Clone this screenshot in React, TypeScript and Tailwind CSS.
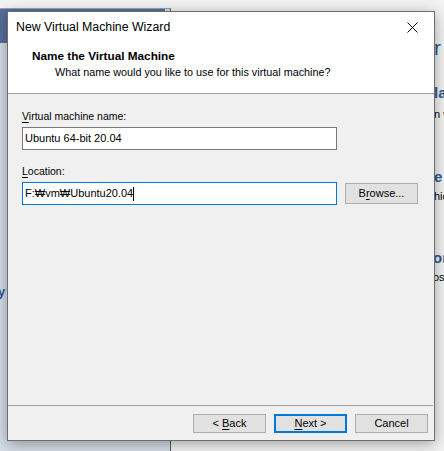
import React from "react";

const FONT = '"Liberation Sans", Arial, "Noto Sans CJK KR", sans-serif';

function U({ children }: { children: React.ReactNode }) {
  return <span className="underline underline-offset-[2px] decoration-[1px]">{children}</span>;
}

function Btn({ children, primary = false, className = "" }: { children: React.ReactNode; primary?: boolean; className?: string }) {
  return (
    <div
      className={
        "flex items-center justify-center w-[73px] h-[19px] bg-[#e1e1e1] text-[11px] leading-none text-black " +
        (primary ? "border-2 border-[#0078d7] " : "border border-[#adadad] ") +
        className
      }
    >
      <span>{children}</span>
    </div>
  );
}

export default function App() {
  return (
    <div className="relative w-[444px] h-[451px] overflow-hidden bg-[#f3f3f3]" style={{ fontFamily: FONT }}>
      {/* window behind: left library panel */}
      <div className="absolute left-0 top-[8px] w-[171px] h-[443px] border-t border-r border-t-[#9aa3b0] border-r-[#5a5a5a] bg-[#d6dee8] flex flex-col">
        <div className="h-[34px] bg-[#56709b] mr-[5px]" />
        <div className="mt-[242px] text-[13px] font-bold text-[#2c5a8f] leading-none whitespace-nowrap">
          <span className="relative left-[-2px]">y</span>
        </div>
      </div>

      {/* window behind: home page fragments on the right */}
      <div className="absolute left-[434px] top-[37px] text-[21px] text-[#2d5b8f] leading-none whitespace-nowrap">r</div>
      <div className="absolute left-[434px] top-[85px] text-[15px] font-bold text-[#2d5b8f] leading-none whitespace-nowrap">la</div>
      <div className="absolute left-[434px] top-[109px] text-[11px] text-black leading-none whitespace-nowrap">n w</div>
      <div className="absolute left-[434px] top-[169px] text-[15px] font-bold text-[#2d5b8f] leading-none whitespace-nowrap">e</div>
      <div className="absolute left-[434px] top-[191px] text-[11px] text-black leading-none whitespace-nowrap">hic</div>
      <div className="absolute left-[433px] top-[250px] text-[15px] font-bold text-[#2d5b8f] leading-none whitespace-nowrap">or</div>
      <div className="absolute left-[433px] top-[272px] text-[11px] text-black leading-none whitespace-nowrap">os</div>

      {/* dialog */}
      <div className="absolute left-[7px] top-[11px] w-[428px] h-[430px] border border-[#6e6e6e] bg-[#f0f0f0] flex flex-col shadow-[0_3px_14px_rgba(0,0,0,0.35)] z-10">
        {/* title + header (white) */}
        <div className="bg-white h-[81px] flex flex-col">
          <div className="h-[30px] flex items-center justify-between">
            <span className="pl-[8px] text-[12.3px] text-black">New Virtual Machine Wizard</span>
            <div className="w-[46px] h-[30px] flex items-center justify-center mr-[-1px]">
              <svg width="11" height="11" viewBox="0 0 11 11">
                <path d="M0.5 0.5 L10.5 10.5 M10.5 0.5 L0.5 10.5" stroke="#000" strokeWidth="1" />
              </svg>
            </div>
          </div>
          <div className="pt-[7px] pl-[24px] flex flex-col">
            <div className="text-[11.75px] font-bold leading-[14px] text-black">Name the Virtual Machine</div>
            <div className="mt-[2px] ml-[23px] text-[10.8px] leading-[14px] text-black">
              What name would you like to use for this virtual machine?
            </div>
          </div>
        </div>
        <div className="h-px bg-[#a0a0a0]" />

        {/* body */}
        <div className="flex-1 flex flex-col pt-[15px] pl-[14px]">
          <div className="text-[10.5px] leading-[14px] text-black">
            <U>V</U>irtual machine name:
          </div>
          <div className="mt-[4px] w-[315px] h-[23px] border border-[#7a7a7a] bg-white flex items-center pl-[2px] text-[11px] text-black">
            Ubuntu 64-bit 20.04
          </div>
          <div className="mt-[14px] text-[10.5px] leading-[14px] text-black">
            <U>L</U>ocation:
          </div>
          <div className="mt-[4px] flex items-center gap-[8px]">
            <div className="w-[315px] h-[23px] border border-[#0078d7] bg-white flex items-center pl-[2px] text-[11px] text-black">
              <span>F:₩vm₩Ubuntu20.04</span>
              <span className="inline-block w-px h-[14px] bg-black" />
            </div>
            <div className="w-[73px] h-[21px] border border-[#adadad] bg-[#e1e1e1] flex items-center justify-center text-[11px] text-black">
              <span>
                B<U>r</U>owse...
              </span>
            </div>
          </div>
        </div>

        {/* footer */}
        <div className="h-px bg-[#a0a0a0] mr-[1px]" />
        <div className="h-[34px] flex justify-end items-start pt-[8px] pr-[6px] gap-[8px]">
          <Btn>
            &lt; <U>B</U>ack
          </Btn>
          <Btn primary>
            <U>N</U>ext &gt;
          </Btn>
          <Btn>Cancel</Btn>
        </div>
      </div>
    </div>
  );
}
